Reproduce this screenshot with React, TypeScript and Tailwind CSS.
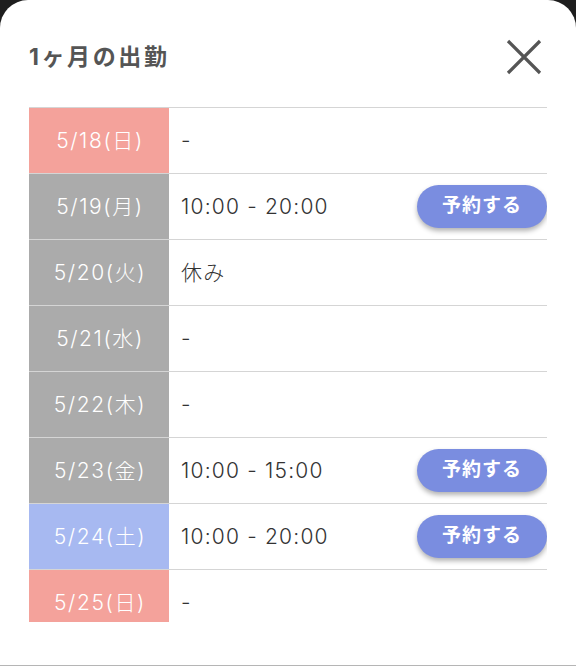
import React from "react";

type Row = { date: string; kind: "sun" | "sat" | "week"; text: string; reserve?: boolean };

const rows: Row[] = [
  { date: "5/18(日)", kind: "sun", text: "-" },
  { date: "5/19(月)", kind: "week", text: "10:00 - 20:00", reserve: true },
  { date: "5/20(火)", kind: "week", text: "休み" },
  { date: "5/21(水)", kind: "week", text: "-" },
  { date: "5/22(木)", kind: "week", text: "-" },
  { date: "5/23(金)", kind: "week", text: "10:00 - 15:00", reserve: true },
  { date: "5/24(土)", kind: "sat", text: "10:00 - 20:00", reserve: true },
  { date: "5/25(日)", kind: "sun", text: "-" },
];

const bg: Record<Row["kind"], string> = {
  sun: "bg-[#f4a29b]",
  sat: "bg-[#a7b9f1]",
  week: "bg-[#ababab]",
};

export default function App() {
  return (
    <div
      className="h-[666px] w-[576px] bg-[#1e1e1e] flex flex-col overflow-hidden"
      style={{ fontFamily: 'Inter, "Noto Sans CJK JP", sans-serif' }}
    >
      <div className="h-[665px] bg-white rounded-t-[28px] flex flex-col">
        <div className="pt-[36px] px-[29px] flex items-center justify-between h-[78px]">
          <div className="text-[23px] font-bold text-[#555555] leading-none tracking-[2.6px]">1ヶ月の出勤</div>
          <svg width="36" height="36" viewBox="0 0 36 36" className="mr-[5px]">
            <path d="M2 2 L34 34 M34 2 L2 34" stroke="#555555" strokeWidth="3.2" strokeLinecap="butt" />
          </svg>
        </div>
        <div className="mt-[29px] mx-[29px] border-t border-[#d5d5d5] h-[515px] overflow-hidden">
          {rows.map((r) => (
            <div key={r.date} className="h-[66px] shrink-0 flex border-b border-[#d5d5d5]">
              <div className={`w-[140px] shrink-0 ${bg[r.kind]} flex items-center justify-center text-white text-[21px] font-light tracking-[1.6px] pl-[2px]`}>
                {r.date}
              </div>
              <div className="flex-1 flex items-center justify-between pl-[12px]">
                <span className="text-[21px] text-[#333333] font-light tracking-[1.2px]">{r.text}</span>
                {r.reserve && (
                  <button className="w-[130px] h-[43px] rounded-full bg-[#7a8de0] text-white text-[19px] font-bold shadow-[0_3px_5px_rgba(0,0,0,0.3)] tracking-[1px]">
                    予約する
                  </button>
                )}
              </div>
            </div>
          ))}
        </div>
      </div>
      <div className="h-[1px] bg-[#b5b5b5]" />
    </div>
  );
}
